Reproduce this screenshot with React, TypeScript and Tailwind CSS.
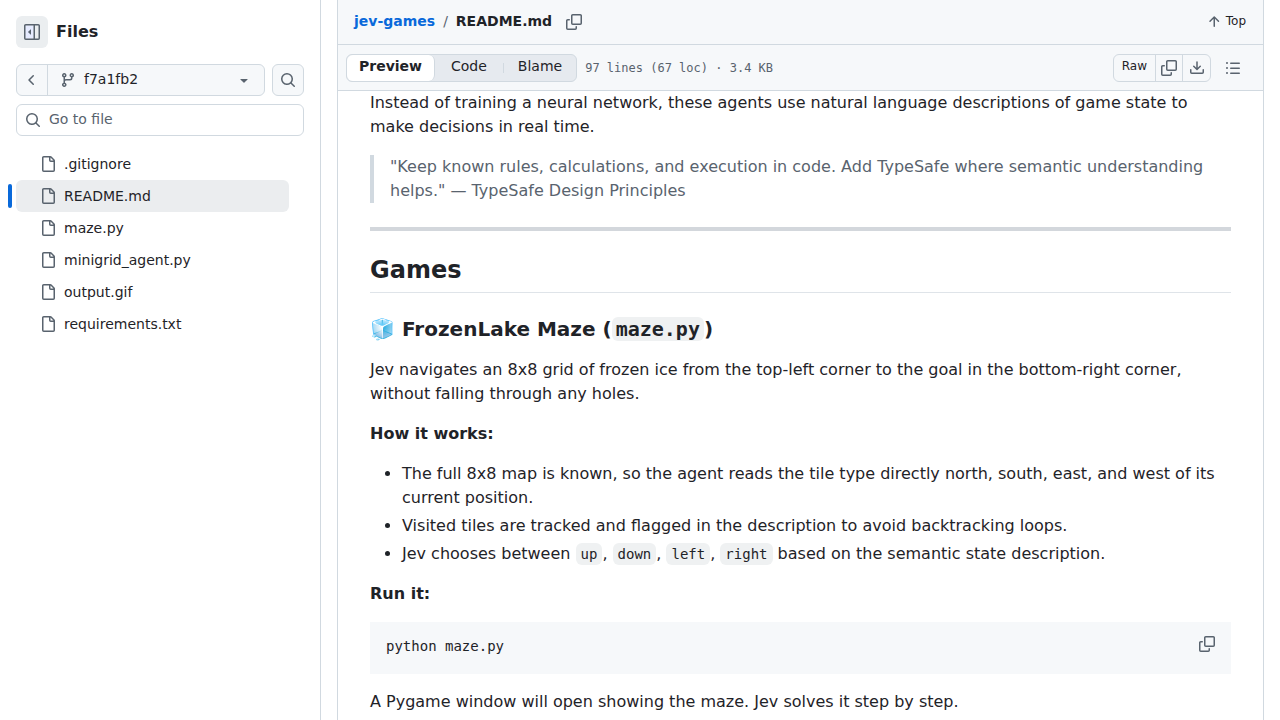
import type { ReactNode } from "react";

const files = [
  ".gitignore",
  "README.md",
  "maze.py",
  "minigrid_agent.py",
  "output.gif",
  "requirements.txt",
];

const icons = {
  sidebar:
    "m4.177 7.823 2.396-2.396A.25.25 0 0 1 7 5.604v4.792a.25.25 0 0 1-.427.177L4.177 8.177a.25.25 0 0 1 0-.354ZM0 1.75C0 .784.784 0 1.75 0h12.5C15.216 0 16 .784 16 1.75v12.5A1.75 1.75 0 0 1 14.25 16H1.75A1.75 1.75 0 0 1 0 14.25Zm1.75-.25a.25.25 0 0 0-.25.25v12.5c0 .138.112.25.25.25H9.5v-13Zm12.5 13a.25.25 0 0 0 .25-.25V1.75a.25.25 0 0 0-.25-.25H11v13Z",
  chevronLeft:
    "M9.78 12.78a.75.75 0 0 1-1.06 0L4.47 8.53a.75.75 0 0 1 0-1.06l4.25-4.25a.751.751 0 0 1 1.042.018.751.751 0 0 1 .018 1.042L6.06 8l3.72 3.72a.75.75 0 0 1 0 1.06Z",
  branch:
    "M9.5 3.25a2.25 2.25 0 1 1 3 2.122V6A2.5 2.5 0 0 1 10 8.5H6a1 1 0 0 0-1 1v1.128a2.251 2.251 0 1 1-1.5 0V5.372a2.25 2.25 0 1 1 1.5 0v1.836A2.493 2.493 0 0 1 6 7h4a1 1 0 0 0 1-1v-.628A2.25 2.25 0 0 1 9.5 3.25Zm-6 0a.75.75 0 1 0 1.5 0 .75.75 0 0 0-1.5 0Zm8.25-.75a.75.75 0 1 0 0 1.5.75.75 0 0 0 0-1.5ZM4.25 12a.75.75 0 1 0 0 1.5.75.75 0 0 0 0-1.5Z",
  triangleDown:
    "m4.427 7.427 3.396 3.396a.25.25 0 0 0 .354 0l3.396-3.396A.25.25 0 0 0 11.396 7H4.604a.25.25 0 0 0-.177.427Z",
  search:
    "M10.68 11.74a6 6 0 0 1-7.922-8.982 6 6 0 0 1 8.982 7.922l3.04 3.04a.749.749 0 0 1-.326 1.275.749.749 0 0 1-.734-.215ZM11.5 7a4.499 4.499 0 1 0-8.997 0A4.499 4.499 0 0 0 11.5 7Z",
  file: "M2 1.75C2 .784 2.784 0 3.75 0h6.586c.464 0 .909.184 1.237.513l2.914 2.914c.329.328.513.773.513 1.237v9.586A1.75 1.75 0 0 1 13.25 16h-9.5A1.75 1.75 0 0 1 2 14.25Zm1.75-.25a.25.25 0 0 0-.25.25v12.5c0 .138.112.25.25.25h9.5a.25.25 0 0 0 .25-.25V6h-2.75A1.75 1.75 0 0 1 9 4.25V1.5Zm6.75.062V4.25c0 .138.112.25.25.25h2.688l-.011-.013-2.914-2.914-.013-.011Z",
  copy: "M0 6.75C0 5.784.784 5 1.75 5h1.5a.75.75 0 0 1 0 1.5h-1.5a.25.25 0 0 0-.25.25v7.5c0 .138.112.25.25.25h7.5a.25.25 0 0 0 .25-.25v-1.5a.75.75 0 0 1 1.5 0v1.5A1.75 1.75 0 0 1 9.25 16h-7.5A1.75 1.75 0 0 1 0 14.25ZM5 1.75C5 .784 5.784 0 6.75 0h7.5C15.216 0 16 .784 16 1.75v7.5A1.75 1.75 0 0 1 14.25 11h-7.5A1.75 1.75 0 0 1 5 9.25Zm1.75-.25a.25.25 0 0 0-.25.25v7.5c0 .138.112.25.25.25h7.5a.25.25 0 0 0 .25-.25v-7.5a.25.25 0 0 0-.25-.25Z",
  arrowUp:
    "M3.47 7.78a.75.75 0 0 1 0-1.06l4.25-4.25a.75.75 0 0 1 1.06 0l4.25 4.25a.751.751 0 0 1-.018 1.042.751.751 0 0 1-1.042.018L9 4.81v7.44a.75.75 0 0 1-1.5 0V4.81L4.53 7.78a.75.75 0 0 1-1.06 0Z",
  download:
    "M2.75 14A1.75 1.75 0 0 1 1 12.25v-2.5a.75.75 0 0 1 1.5 0v2.5c0 .138.112.25.25.25h10.5a.25.25 0 0 0 .25-.25v-2.5a.75.75 0 0 1 1.5 0v2.5A1.75 1.75 0 0 1 13.25 14ZM7.25 7.689V2a.75.75 0 0 1 1.5 0v5.689l1.97-1.969a.749.749 0 1 1 1.06 1.06l-3.25 3.25a.749.749 0 0 1-1.06 0L4.22 6.78a.749.749 0 1 1 1.06-1.06l1.97 1.969Z",
  list: "M5.75 2.5h8.5a.75.75 0 0 1 0 1.5h-8.5a.75.75 0 0 1 0-1.5Zm0 5h8.5a.75.75 0 0 1 0 1.5h-8.5a.75.75 0 0 1 0-1.5Zm0 5h8.5a.75.75 0 0 1 0 1.5h-8.5a.75.75 0 0 1 0-1.5ZM2 14a1 1 0 1 1 0-2 1 1 0 0 1 0 2Zm1-6a1 1 0 1 1-2 0 1 1 0 0 1 2 0ZM2 4a1 1 0 1 1 0-2 1 1 0 0 1 0 2Z",
};

function Icon({ name }: { name: keyof typeof icons }) {
  return (
    <svg
      viewBox="0 0 16 16"
      className="size-4 shrink-0 fill-[#59636e]"
      aria-hidden="true"
    >
      {name === "sidebar" && (
        <path className="fill-[#e6ebff]" d="M1.5 1.5h8v13h-8Z" />
      )}
      <path d={icons[name]} />
    </svg>
  );
}

function Code({ children }: { children: ReactNode }) {
  return (
    <code className="rounded-md bg-[#eff1f2] px-[5px] py-[3px] font-['DejaVu_Sans_Mono',monospace] text-sm">
      {children}
    </code>
  );
}

function Sidebar() {
  return (
    <aside className="w-[321px] shrink-0 border-r border-[#d1d9e0] pt-4">
      <div className="flex items-center gap-2 px-4">
        <button
          aria-label="Collapse file tree"
          className="flex size-8 items-center justify-center rounded-md bg-[#ebeef0]"
        >
          <Icon name="sidebar" />
        </button>
        <h2 className="text-base font-bold">Files</h2>
      </div>

      <div className="mt-4 flex gap-[7px] px-4">
        <div className="flex h-8 flex-1 rounded-md border border-[#d1d9e0] bg-[#f6f8fa]">
          <a
            href="#back"
            aria-label="Back to branch"
            className="flex w-[31px] items-center justify-center border-r border-[#d1d9e0]"
          >
            <Icon name="chevronLeft" />
          </a>
          <button className="flex flex-1 items-center gap-2 px-3">
            <Icon name="branch" />
            <span className="flex-1 pb-0.5 text-left text-sm">f7a1fb2</span>
            <Icon name="triangleDown" />
          </button>
        </div>
        <button
          aria-label="Search this repository"
          className="flex size-8 items-center justify-center rounded-md border border-[#d1d9e0] bg-[#f6f8fa]"
        >
          <Icon name="search" />
        </button>
      </div>

      <label className="mx-4 mt-2 flex h-8 items-center gap-2 rounded-md border border-[#d1d9e0] px-2">
        <Icon name="search" />
        <input
          type="text"
          aria-label="Go to file"
          placeholder="Go to file"
          className="min-w-0 flex-1 pb-0.5 text-sm outline-none placeholder:text-[#59636e]"
        />
      </label>

      <ul className="mt-3 pr-[31px] pl-2">
        {files.map((file) => {
          const active = file === "README.md";
          return (
            <li key={file} className="flex items-center gap-1">
              <span
                className={
                  active ? "h-6 w-1 rounded-md bg-[#0969da]" : "h-6 w-1"
                }
              />
              <a
                href={`#${file}`}
                className={
                  active
                    ? "flex h-8 flex-1 items-center gap-2 rounded-md bg-[#ebedef] pl-6 text-sm"
                    : "flex h-8 flex-1 items-center gap-2 rounded-md pl-6 text-sm"
                }
              >
                <Icon name="file" />
                <span className="pb-px">{file}</span>
              </a>
            </li>
          );
        })}
      </ul>
    </aside>
  );
}

function FileHeader() {
  return (
    <header className="border-b border-[#d1d9e0] bg-[#f6f8fa]">
      <div className="flex h-[45px] items-center justify-between border-b border-[#d1d9e0] px-4">
        <div className="flex items-center text-sm">
          <div className="flex pb-0.5">
            <a href="#jev-games" className="font-bold text-[#0969da]">
              jev-games
            </a>
            <span className="px-2 text-[#59636e]">/</span>
            <h1 className="font-bold">README.md</h1>
          </div>
          <button aria-label="Copy path" className="ml-3.5">
            <Icon name="copy" />
          </button>
        </div>
        <button className="flex items-center gap-1 pr-px text-xs">
          <Icon name="arrowUp" />
          <span className="pb-0.5">Top</span>
        </button>
      </div>

      <div className="flex h-[45px] items-center justify-between pr-4 pl-2">
        <div className="flex items-center gap-2">
          <div className="flex h-7 items-stretch rounded-md border border-[#d1d9e0] bg-[#e6eaef] text-sm">
            <button className="rounded-md border-r border-[#d1d9e0] bg-white px-3 pb-[3px] font-bold">
              Preview
            </button>
            <button className="px-4 pb-[3px]">Code</button>
            <span className="my-2 w-px bg-[#d1d9e0]" />
            <button className="px-3.5 pb-[3px]">Blame</button>
          </div>
          <span className="font-['DejaVu_Sans_Mono',monospace] text-xs text-[#59636e]">
            97 lines (67 loc) · 3.4 KB
          </span>
        </div>
        <div className="flex items-center gap-2">
          <div className="flex h-7 rounded-md border border-[#d1d9e0] text-xs">
            <a
              href="#raw"
              className="flex items-center border-r border-[#d1d9e0] px-2 pb-[3px]"
            >
              Raw
            </a>
            <button
              aria-label="Copy raw file"
              className="flex w-[27px] items-center justify-center border-r border-[#d1d9e0]"
            >
              <Icon name="copy" />
            </button>
            <button
              aria-label="Download raw file"
              className="flex w-[27px] items-center justify-center"
            >
              <Icon name="download" />
            </button>
          </div>
          <button
            aria-label="Outline"
            className="flex w-7 items-center justify-center"
          >
            <Icon name="list" />
          </button>
        </div>
      </div>
    </header>
  );
}

function Readme() {
  return (
    <article className="px-8 text-base">
      <p className="mb-4">
        Instead of training a neural network, these agents use natural language
        descriptions of game state to make decisions in real time.
      </p>
      <blockquote className="border-l-4 border-[#d1d9e0] pl-4 text-[#59636e]">
        "Keep known rules, calculations, and execution in code. Add TypeSafe
        where semantic understanding helps." — TypeSafe Design Principles
      </blockquote>
      <hr className="my-6 h-1 border-0 bg-[#d3d7dc]" />

      <h2 className="mb-6 border-b border-[#dfe4e9] pb-[7px] text-2xl leading-[30px] font-bold">
        Games
      </h2>
      <h3 className="mb-4 text-xl leading-[25px] font-bold">
        🧊 FrozenLake Maze (
        <code className="rounded-md bg-[#eff1f2] px-1 font-['DejaVu_Sans_Mono',monospace]">
          maze.py
        </code>
        )
      </h3>
      <p className="mb-4">
        Jev navigates an 8x8 grid of frozen ice from the top-left corner to the
        goal in the bottom-right corner, without falling through any holes.
      </p>
      <p className="mb-4 font-bold">How it works:</p>
      <ul className="mb-4 list-disc space-y-1 pl-8">
        <li>
          The full 8x8 map is known, so the agent reads the tile type directly
          north, south, east, and west of its current position.
        </li>
        <li>
          Visited tiles are tracked and flagged in the description to avoid
          backtracking loops.
        </li>
        <li>
          Jev chooses between <Code>up</Code>, <Code>down</Code>,{" "}
          <Code>left</Code>, <Code>right</Code> based on the semantic state
          description.
        </li>
      </ul>
      <p className="mb-4 font-bold">Run it:</p>
      <div className="mb-4 flex items-start justify-between bg-[#f6f8fa] pl-4">
        <pre className="pt-3.5 pb-[18px] font-['DejaVu_Sans_Mono',monospace] text-sm">
          python maze.py
        </pre>
        <button aria-label="Copy code" className="p-4 pt-3.5">
          <Icon name="copy" />
        </button>
      </div>
      <p>
        A Pygame window will open showing the maze. Jev solves it step by step.
      </p>
    </article>
  );
}

export default function App() {
  return (
    <div className="flex min-h-screen bg-white font-['DejaVu_Sans',sans-serif] text-[#1f2328]">
      <Sidebar />
      <main className="mx-4 min-w-0 flex-1 border-x border-[#d1d9e0]">
        <FileHeader />
        <Readme />
      </main>
    </div>
  );
}
